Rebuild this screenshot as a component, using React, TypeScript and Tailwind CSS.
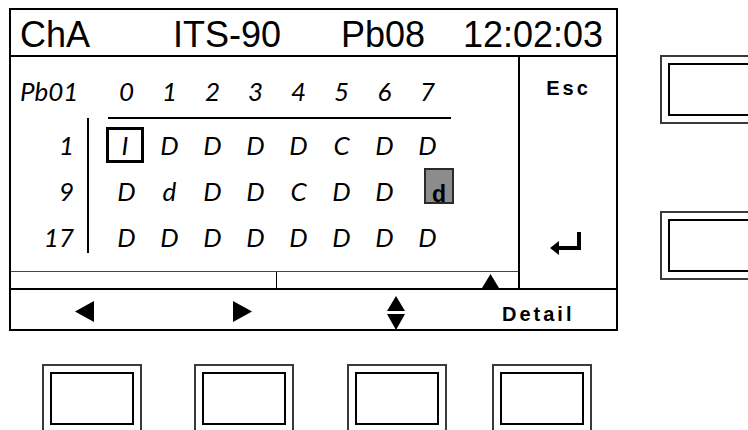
import React from "react";

const italic = { fontFamily: "Lato, 'Open Sans', sans-serif" };

function Btn() {
  return (
    <div className="w-[100px] h-[69px] shrink-0 border-2 border-[#3a3a3a] p-[6px]">
      <div className="w-full h-full border-2 border-black" />
    </div>
  );
}

const rows: { label: string; cells: string[] }[] = [
  { label: "1", cells: ["#I", "D", "D", "D", "D", "C", "D", "D"] },
  { label: "9", cells: ["D", "d", "D", "D", "C", "D", "D", "@d"] },
  { label: "17", cells: ["D", "D", "D", "D", "D", "D", "D", "D"] },
];

function Cell({ v }: { v: string }) {
  if (v.startsWith("#")) {
    return (
      <div className="w-[43px] h-[46px] flex items-center">
        <div className="ml-[1px] w-[38px] h-[36px] border-[3px] border-black flex justify-center leading-[30px]">
          {v.slice(1)}
        </div>
      </div>
    );
  }
  if (v.startsWith("@")) {
    return (
      <div className="w-[43px] h-[46px] flex items-start">
        <div className="ml-[18px] w-[30px] h-[36px] shrink-0 border-2 border-[#2a2a2a] bg-[#8c8c8c] flex items-end justify-center">
          <span
            className="not-italic font-bold text-[23px] leading-[23px] -mb-[4px] text-black"
            style={{ fontFamily: "'Liberation Sans', Arial, sans-serif" }}
          >
            {v.slice(1)}
          </span>
        </div>
      </div>
    );
  }
  return <div className="w-[43px] h-[46px] text-center leading-[46px]">{v}</div>;
}

export default function App() {
  return (
    <div className="w-[748px] h-[430px] overflow-hidden bg-white flex text-black">
      <div className="flex flex-col pl-[9px] pt-[8px] shrink-0">
        {/* screen */}
        <div className="w-[609px] h-[323px] border-2 border-black flex flex-col">
          {/* header */}
          <div
            className="h-[47px] border-b-2 border-black flex text-[36px] leading-[45px] pt-[2px]"
            style={{ fontFamily: "'Liberation Sans', Arial, sans-serif" }}
          >
            <div className="w-[162px] pl-[9px] shrink-0">ChA</div>
            <div className="w-[168px] shrink-0">ITS-90</div>
            <div className="w-[122px] shrink-0">Pb08</div>
            <div className="shrink-0">12:02:03</div>
          </div>
          {/* middle */}
          <div className="h-[231px] flex">
            <div className="w-[507px] flex flex-col">
              <div className="h-[214px] italic text-[26px]" style={italic}>
                <div className="h-[60px] flex pt-[21px] leading-[26px]">
                  <div className="w-[94px] pl-[9px]">Pb01</div>
                  {["0", "1", "2", "3", "4", "5", "6", "7"].map((d) => (
                    <div key={d} className="w-[43px] text-center">
                      {d}
                    </div>
                  ))}
                </div>
                <div className="h-[2px] ml-[97px] w-[343px] bg-black" />
                <div className="flex">
                  <div className="w-[76px] pt-[3px] pr-[13px] flex flex-col items-end">
                    {rows.map((r) => (
                      <div key={r.label} className="h-[46px] leading-[46px]">
                        {r.label}
                      </div>
                    ))}
                  </div>
                  <div className="w-[2px] h-[135px] bg-black -mt-[1px]" />
                  <div className="ml-[16px] pt-[3px] flex flex-col">
                    {rows.map((r) => (
                      <div key={r.label} className="flex">
                        {r.cells.map((c, i) => (
                          <Cell key={i} v={c} />
                        ))}
                      </div>
                    ))}
                  </div>
                </div>
              </div>
              {/* scroll band */}
              <div className="h-[17px] border-t border-[#444] flex">
                <div className="w-[266px] border-r border-black" />
                <div className="flex-1 flex items-end pl-[205px]">
                  <svg width="17" height="14" viewBox="0 0 17 14">
                    <polygon points="8.5,0 17,14 0,14" fill="black" />
                  </svg>
                </div>
              </div>
            </div>
            {/* esc column */}
            <div className="w-[98px] border-l-2 border-black flex flex-col">
              <div
                className="pt-[21px] text-center font-bold text-[20px] leading-[20px] tracking-[3px] pl-[1px]"
                style={{ fontFamily: "'Liberation Sans', Arial, sans-serif" }}
              >
                Esc
              </div>
              <div className="mt-[134px] ml-[30px]">
                <svg width="32" height="23" viewBox="0 0 32 23">
                  <rect x="27" y="0" width="4" height="18" fill="black" />
                  <rect x="8" y="14" width="23" height="4" fill="black" />
                  <polygon points="0,16 9,9 9,23" fill="black" />
                </svg>
              </div>
            </div>
          </div>
          {/* softkey bar */}
          <div className="h-[41px] border-t-2 border-black flex items-start">
            <svg className="ml-[64px] mt-[11px]" width="19" height="21" viewBox="0 0 19 21">
              <polygon points="0,10.5 19,0 19,21" fill="black" />
            </svg>
            <svg className="ml-[139px] mt-[11px]" width="19" height="21" viewBox="0 0 19 21">
              <polygon points="19,10.5 0,0 0,21" fill="black" />
            </svg>
            <svg className="ml-[135px] mt-[6px]" width="18" height="34" viewBox="0 0 18 34">
              <polygon points="9,0 18,15 0,15" fill="black" />
              <polygon points="0,18 18,18 9,34" fill="black" />
            </svg>
            <div
              className="ml-[97px] mt-[14px] font-bold text-[20px] leading-[20px] tracking-[3px]"
              style={{ fontFamily: "'Liberation Sans', Arial, sans-serif" }}
            >
              Detail
            </div>
          </div>
        </div>
        {/* bottom buttons */}
        <div className="flex mt-[33px]">
          <div className="ml-[33px]">
            <Btn />
          </div>
          <div className="ml-[52px]">
            <Btn />
          </div>
          <div className="ml-[53px]">
            <Btn />
          </div>
          <div className="ml-[45px]">
            <Btn />
          </div>
        </div>
      </div>
      <div className="ml-[42px] pt-[55px] flex flex-col shrink-0">
        <Btn />
        <div className="mt-[87px]">
          <Btn />
        </div>
      </div>
    </div>
  );
}
